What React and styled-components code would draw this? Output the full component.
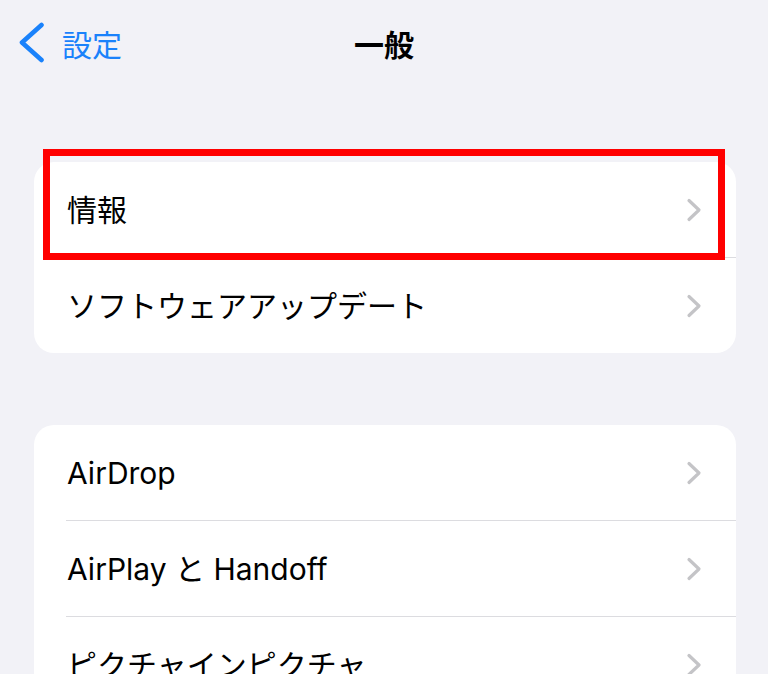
import React from "react";
import styled, { createGlobalStyle } from "styled-components";

const Global = createGlobalStyle`
  html, body { margin: 0; padding: 0; background: #f2f2f7; }
  body { font-family: Inter, "Noto Sans CJK JP", sans-serif; -webkit-font-smoothing: antialiased; }
  #root { width: 768px; height: 674px; overflow: hidden; }
`;

const Page = styled.div`
  width: 768px;
  height: 674px;
  background: #f2f2f7;
  display: flex;
  flex-direction: column;
  overflow: hidden;
`;

const NavBar = styled.div`
  flex-shrink: 0;
  display: grid;
  grid-template-columns: 1fr auto 1fr;
  align-items: center;
  height: 86px;
  padding: 0 19px;
  box-sizing: border-box;
`;

const Back = styled.div`
  display: flex;
  align-items: center;
  gap: 17px;
  color: #1a82fb;
  font-size: 30px;
  font-family: "Noto Sans CJK JP", sans-serif;
  line-height: 1;
`;

const Title = styled.div`
  font-family: "Noto Sans CJK JP", sans-serif;
  font-weight: 700;
  font-size: 30px;
  color: #000;
  line-height: 1;
`;

const Content = styled.div`
  flex-shrink: 0;
  display: flex;
  flex-direction: column;
  gap: 72px;
  padding: 76px 32px 0 34px;
`;

const Card = styled.div`
  flex-shrink: 0;
  background: #fff;
  border-radius: 20px;
  display: flex;
  flex-direction: column;
`;

const Row = styled.div`
  position: relative;
  flex-shrink: 0;
  display: flex;
  align-items: center;
  justify-content: space-between;
  height: 95px;
  padding: 0 34px 0 33px;
`;

const Separator = styled.div`
  flex-shrink: 0;
  height: 1px;
  margin-left: 32px;
  background: #dcdce0;
`;

const Label = styled.span`
  font-size: 30px;
  color: #000;
  line-height: 1;
`;

const Highlight = styled.div`
  position: absolute;
  left: 9px;
  top: -13px;
  width: 682px;
  height: 111px;
  border: 7px solid #ff0000;
  box-sizing: border-box;
  pointer-events: none;
`;

const Chevron = () => (
  <svg width="16" height="24" viewBox="0 0 16 24" style={{ display: "block" }}>
    <polyline
      points="3,2.5 13,12 3,21.5"
      fill="none"
      stroke="#c4c4c7"
      strokeWidth="3.2"
      strokeLinecap="round"
      strokeLinejoin="round"
    />
  </svg>
);

const BackChevron = () => (
  <svg width="26" height="42" viewBox="0 0 26 42" style={{ display: "block" }}>
    <polyline
      points="22.5,3 3,20.5 22.5,38"
      fill="none"
      stroke="#1a82fb"
      strokeWidth="4.6"
      strokeLinecap="round"
      strokeLinejoin="round"
    />
  </svg>
);

const groups = [
  ["情報", "ソフトウェアアップデート"],
  ["AirDrop", "AirPlay と Handoff", "ピクチャインピクチャ"],
];

export default function App() {
  return (
    <Page>
      <Global />
      <NavBar>
        <Back>
          <BackChevron />
          <span>設定</span>
        </Back>
        <Title>一般</Title>
        <div />
      </NavBar>
      <Content>
        {groups.map((items, gi) => (
          <Card key={gi}>
            {items.map((label, i) => (
              <React.Fragment key={label}>
                {i > 0 && <Separator />}
                <Row>
                  <Label>{label}</Label>
                  <Chevron />
                  {gi === 0 && i === 0 && <Highlight />}
                </Row>
              </React.Fragment>
            ))}
          </Card>
        ))}
      </Content>
    </Page>
  );
}
